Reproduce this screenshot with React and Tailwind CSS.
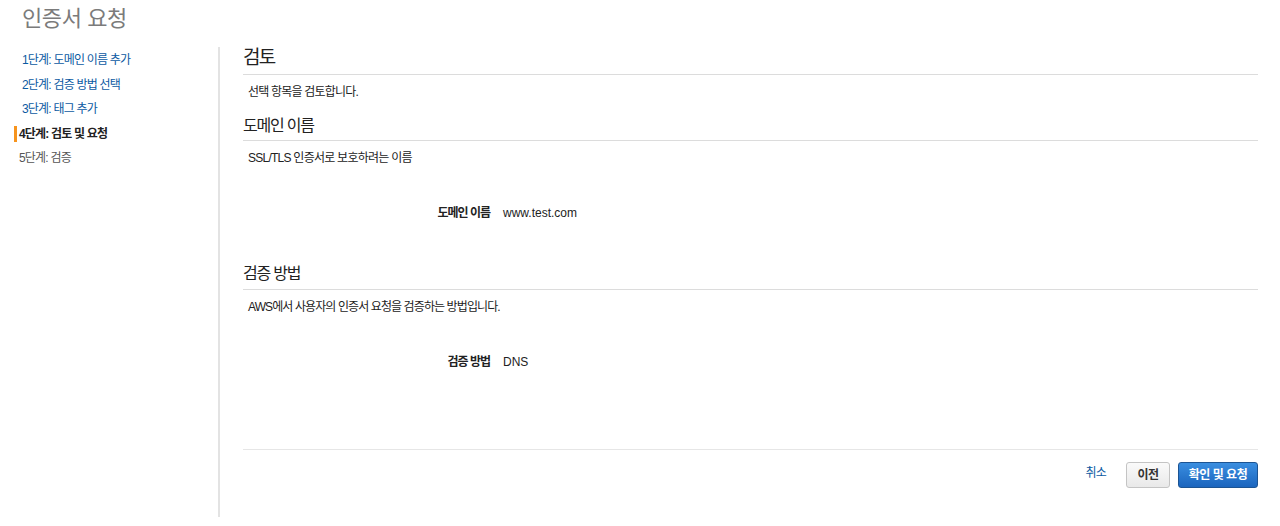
import React from "react";

const steps = [
  { label: "1단계: 도메인 이름 추가", state: "link" },
  { label: "2단계: 검증 방법 선택", state: "link" },
  { label: "3단계: 태그 추가", state: "link" },
  { label: "4단계: 검토 및 요청", state: "active" },
  { label: "5단계: 검증", state: "todo" },
];

const Detail = ({ label, value }) => (
  <div className="flex items-center text-[12px] leading-[16px]">
    <div className="w-[247px] text-right font-bold text-[#222] tracking-[-1px]">{label}</div>
    <div className="pl-[13px] text-[#222]">{value}</div>
  </div>
);

const App = () => {
  return (
    <div
      className="w-[1280px] h-[526px] bg-white overflow-hidden text-[#333]"
      style={{ fontFamily: '"Liberation Sans", "Noto Sans CJK KR", sans-serif' }}
    >
      {/* title */}
      <div className="h-[47px] pl-[22px] pt-[4px]">
        <h1 className="text-[22px] leading-[30px] text-[#7b7b7b] tracking-[-0.4px]">인증서 요청</h1>
      </div>

      <div className="flex">
        {/* steps */}
        <div className="w-[220px] h-[470px] pt-[1px] border-r-2 border-[#e3e3e3] shrink-0">
          {steps.map((s) => (
            <div key={s.label} className="relative h-[24.5px] flex items-center text-[12px] tracking-[-0.8px]">
              {s.state === "active" && (
                <span className="absolute left-[14px] top-[4px] w-[3px] h-[16px] bg-[#f7941d]" />
              )}
              <span
                className={
                  s.state === "link"
                    ? "pl-[22px] text-[#0b5aa2]"
                    : s.state === "active"
                    ? "pl-[19px] font-bold text-[#222]"
                    : "pl-[19px] text-[#555]"
                }
              >
                {s.label}
              </span>
            </div>
          ))}
        </div>

        {/* review */}
        <div className="flex-1 pl-[23px] pr-[22px]">
          <h2 className="text-[19px] leading-[22px] pb-[5px] border-b border-[#dcdcdc] text-[#222] tracking-[-1.8px]">
            검토
          </h2>
          <p className="mt-[9px] pl-[5px] text-[12px] leading-[16px] text-[#222] tracking-[-0.8px]">
            선택 항목을 검토합니다.
          </p>

          <h3 className="mt-[16px] text-[16px] leading-[20px] pb-[4px] border-b border-[#dcdcdc] text-[#222] tracking-[-1.2px]">
            도메인 이름
          </h3>
          <p className="mt-[9px] pl-[5px] text-[12px] leading-[16px] text-[#222] tracking-[-0.75px]">
            SSL/TLS 인증서로 보호하려는 이름
          </p>
          <div className="mt-[39px]">
            <Detail label="도메인 이름" value="www.test.com" />
          </div>

          <h3 className="mt-[43px] text-[16px] leading-[20px] pb-[5px] border-b border-[#dcdcdc] text-[#222] tracking-[-1.2px]">
            검증 방법
          </h3>
          <p className="mt-[9px] pl-[5px] text-[12px] leading-[16px] text-[#222] tracking-[-0.9px]">
            AWS에서 사용자의 인증서 요청을 검증하는 방법입니다.
          </p>
          <div className="mt-[39px]">
            <Detail label="검증 방법" value="DNS" />
          </div>

          <div className="mt-[79px] border-t border-[#e6e6e6] pt-[12px] flex items-center justify-end">
            <button className="text-[12px] text-[#0b5aa2] mr-[20px] -mt-[4px] tracking-[-0.8px]">취소</button>
            <button className="w-[44px] h-[26px] rounded-[3px] border border-[#c4c4c4] bg-gradient-to-b from-[#fafafa] to-[#e9e9e9] text-[12px] font-bold text-[#333] tracking-[-0.5px]">
              이전
            </button>
            <button className="ml-[8px] w-[80px] h-[26px] rounded-[3px] border border-[#1c5493] bg-gradient-to-b from-[#3a8ee0] to-[#1b65be] text-[12px] font-bold text-white tracking-[-0.5px]">
              확인 및 요청
            </button>
          </div>
        </div>
      </div>
    </div>
  );
};

export default App;
